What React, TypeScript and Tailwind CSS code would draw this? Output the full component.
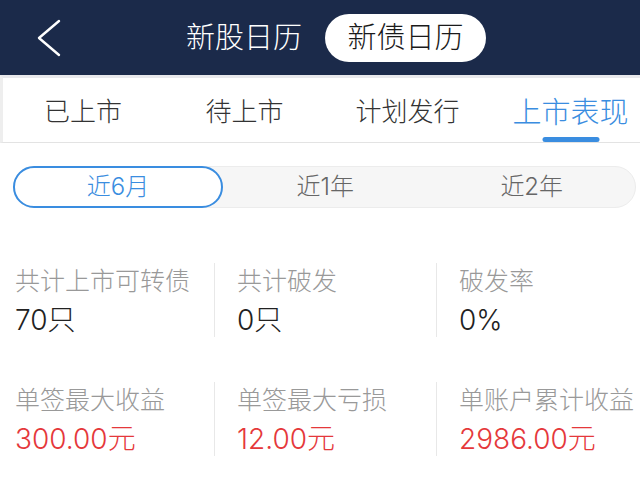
import React from "react";

const font = { fontFamily: 'Inter, "Noto Sans CJK SC", "Noto Sans", sans-serif' };

function Stat({ label, value, red, first }: { label: string; value: string; red?: boolean; first?: boolean }) {
  return (
    <div
      className={
        first
          ? "w-[199px] shrink-0 flex flex-col pt-[3px]"
          : "w-[222px] shrink-0 flex flex-col pt-[3px] border-l border-[#e8e8e8] pl-[22px]"
      }
    >
      <div className="text-[25px] leading-[30px] font-light text-[#999999] whitespace-nowrap">{label}</div>
      <div
        className={
          "mt-[7px] text-[28px] leading-[34px] font-light whitespace-nowrap " +
          (red ? "text-[#e5383b]" : "text-[#222222]")
        }
      >
        {value}
      </div>
    </div>
  );
}

export default function App() {
  const tabs = ["已上市", "待上市", "计划发行", "上市表现"];
  return (
    <div className="w-[640px] h-[482px] bg-white overflow-hidden" style={font}>
      {/* Header */}
      <div className="h-[75px] bg-[#1b2a4a] flex items-center">
        <svg className="ml-[37px] shrink-0" width="24" height="40" viewBox="0 0 24 40">
          <polyline
            points="22,3 2,20 22,37"
            fill="none"
            stroke="#ffffff"
            strokeWidth="2.4"
            strokeLinecap="round"
            strokeLinejoin="round"
          />
        </svg>
        <div className="ml-[125px] text-[29px] leading-none font-light text-white whitespace-nowrap">新股日历</div>
        <div className="ml-[23px] w-[161px] h-[48px] shrink-0 rounded-full bg-white flex items-center justify-center">
          <span className="text-[29px] leading-none font-light text-[#1a1a1a] whitespace-nowrap">新债日历</span>
        </div>
      </div>

      {/* Tabs */}
      <div className="h-[68px] border-t-[3px] border-t-[#e8e8ec] border-b border-b-[#e3e3e3] border-l-[3px] border-l-[#eeeeee] flex overflow-hidden">
        {tabs.map((t, i) => {
          const active = i === 3;
          return (
            <div
              key={t}
              className={
                "relative shrink-0 h-full pt-[4px] flex items-center justify-center " +
                (i === 0 ? "w-[160px]" : "w-[163px]")
              }
            >
              <span
                className={
                  active
                    ? "text-[29px] leading-none font-light text-[#3a8de0] whitespace-nowrap"
                    : "text-[26px] leading-none font-light text-[#333333] whitespace-nowrap"
                }
              >
                {t}
              </span>
              {active && (
                <div className="absolute bottom-0 left-1/2 -translate-x-1/2 w-[57px] h-[5px] rounded-full bg-[#3a8de0]" />
              )}
            </div>
          );
        })}
      </div>

      {/* Segmented */}
      <div className="mt-[23px] ml-[13px] w-[623px] h-[42px] rounded-full bg-[#f6f6f6] border border-[#ececec] flex items-stretch">
        <div className="-m-px w-[210px] shrink-0 rounded-full border-2 border-[#3a8de0] bg-white flex items-center justify-center">
          <span className="text-[24px] leading-none font-light text-[#3a8de0]">近6月</span>
        </div>
        <div className="flex-1 flex items-center justify-center">
          <span className="text-[24px] leading-none font-light text-[#666666]">近1年</span>
        </div>
        <div className="flex-1 flex items-center justify-center">
          <span className="text-[24px] leading-none font-light text-[#666666]">近2年</span>
        </div>
      </div>

      {/* Stats */}
      <div className="mt-[55px] pl-[15px] flex">
        <Stat first label="共计上市可转债" value="70只" />
        <Stat label="共计破发" value="0只" />
        <Stat label="破发率" value="0%" />
      </div>
      <div className="mt-[45px] pl-[15px] flex">
        <Stat first label="单签最大收益" value="300.00元" red />
        <Stat label="单签最大亏损" value="12.00元" red />
        <Stat label="单账户累计收益" value="2986.00元" red />
      </div>
    </div>
  );
}
